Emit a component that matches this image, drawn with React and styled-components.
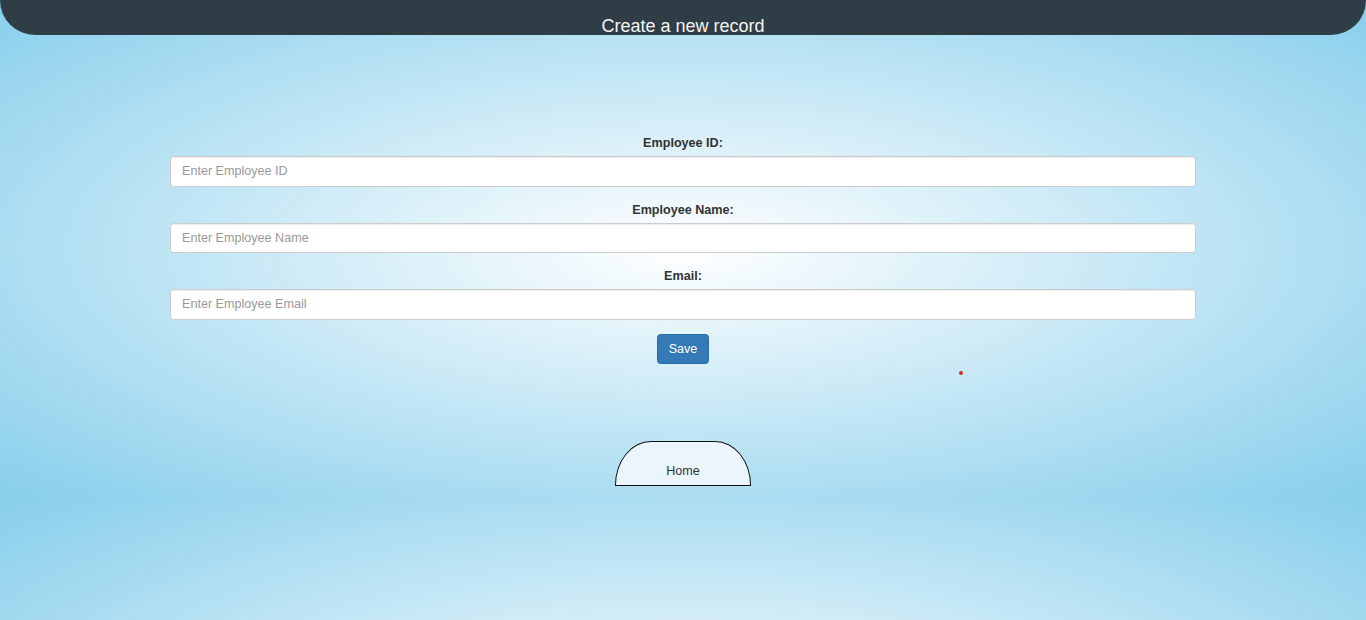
import React from 'react';
import styled, { createGlobalStyle } from 'styled-components';

const GlobalStyle = createGlobalStyle`
html {
    min-height: 100%;
    background: radial-gradient(ellipse at center, #ffffff 0%, #87ceeb 100%);
    background-size: 100% 497px;
    background-repeat: repeat;
}
body {
    margin: 0;
    font-family: "Liberation Sans", Arial, sans-serif;
    color: #333;
}
`;

const Page = styled.div`
position: relative;
display: flex;
flex-direction: column;
align-items: center;
`;

const Header = styled.header`
align-self: stretch;
box-sizing: border-box;
height: 35px;
padding-top: 16px;
background: #2f3e46;
border-radius: 0 0 35px 35px;
color: #f4f4f4;
font-size: 18px;
line-height: 21px;
text-align: center;
overflow: hidden;
`;

const Form = styled.form`
width: 1026px;
margin-top: 99px;
display: flex;
flex-direction: column;
align-items: center;
`;

const Group = styled.div`
align-self: stretch;
margin-bottom: 14px;
`;

const Label = styled.label`
display: block;
margin-bottom: 4px;
font-size: 12.6px;
line-height: 18px;
font-weight: bold;
text-align: center;
color: #333;
`;

const Input = styled.input`
display: block;
box-sizing: border-box;
width: 100%;
height: 30.5px;
padding: 5px 11px;
font-family: "Liberation Sans", Arial, sans-serif;
font-size: 12.6px;
color: #555;
background: #fff;
border: 1px solid #ccc;
border-radius: 3.6px;
box-shadow: inset 0 1px 1px rgba(0, 0, 0, 0.075);
&::placeholder {
    color: #999;
}
`;

const SaveButton = styled.button`
box-sizing: border-box;
height: 30.5px;
padding: 0 11px;
font-family: "Liberation Sans", Arial, sans-serif;
font-size: 12.6px;
color: #fff;
background: #337ab7;
border: 1px solid #2e6da4;
border-radius: 3.6px;
`;

const HomeButton = styled.a`
box-sizing: border-box;
margin-top: 77px;
width: 136px;
height: 45px;
display: flex;
align-items: flex-end;
justify-content: center;
padding-bottom: 5px;
font-size: 12.6px;
line-height: 18px;
color: #333;
text-decoration: none;
background: #eaf5fc;
border: 1.5px solid #111;
border-radius: 36px 36px 0 0 / 44px 44px 0 0;
`;

const Dot = styled.span`
position: absolute;
left: 959px;
top: 371px;
width: 4px;
height: 4px;
border-radius: 50%;
background: #d42a2a;
`;

const fields = [
    { id: 'empId', label: 'Employee ID:', placeholder: 'Enter Employee ID' },
    { id: 'empName', label: 'Employee Name:', placeholder: 'Enter Employee Name' },
    { id: 'email', label: 'Email:', placeholder: 'Enter Employee Email' },
];

export default function App() {
    return (
        <Page>
            <GlobalStyle />
            <Header>Create a new record</Header>
            <Form onSubmit={e => e.preventDefault()}>
                {fields.map(f => (
                    <Group key={f.id}>
                        <Label htmlFor={f.id}>{f.label}</Label>
                        <Input id={f.id} placeholder={f.placeholder} />
                    </Group>
                ))}
                <SaveButton type="submit">Save</SaveButton>
            </Form>
            <HomeButton href="#">Home</HomeButton>
            <Dot />
        </Page>
    );
}
